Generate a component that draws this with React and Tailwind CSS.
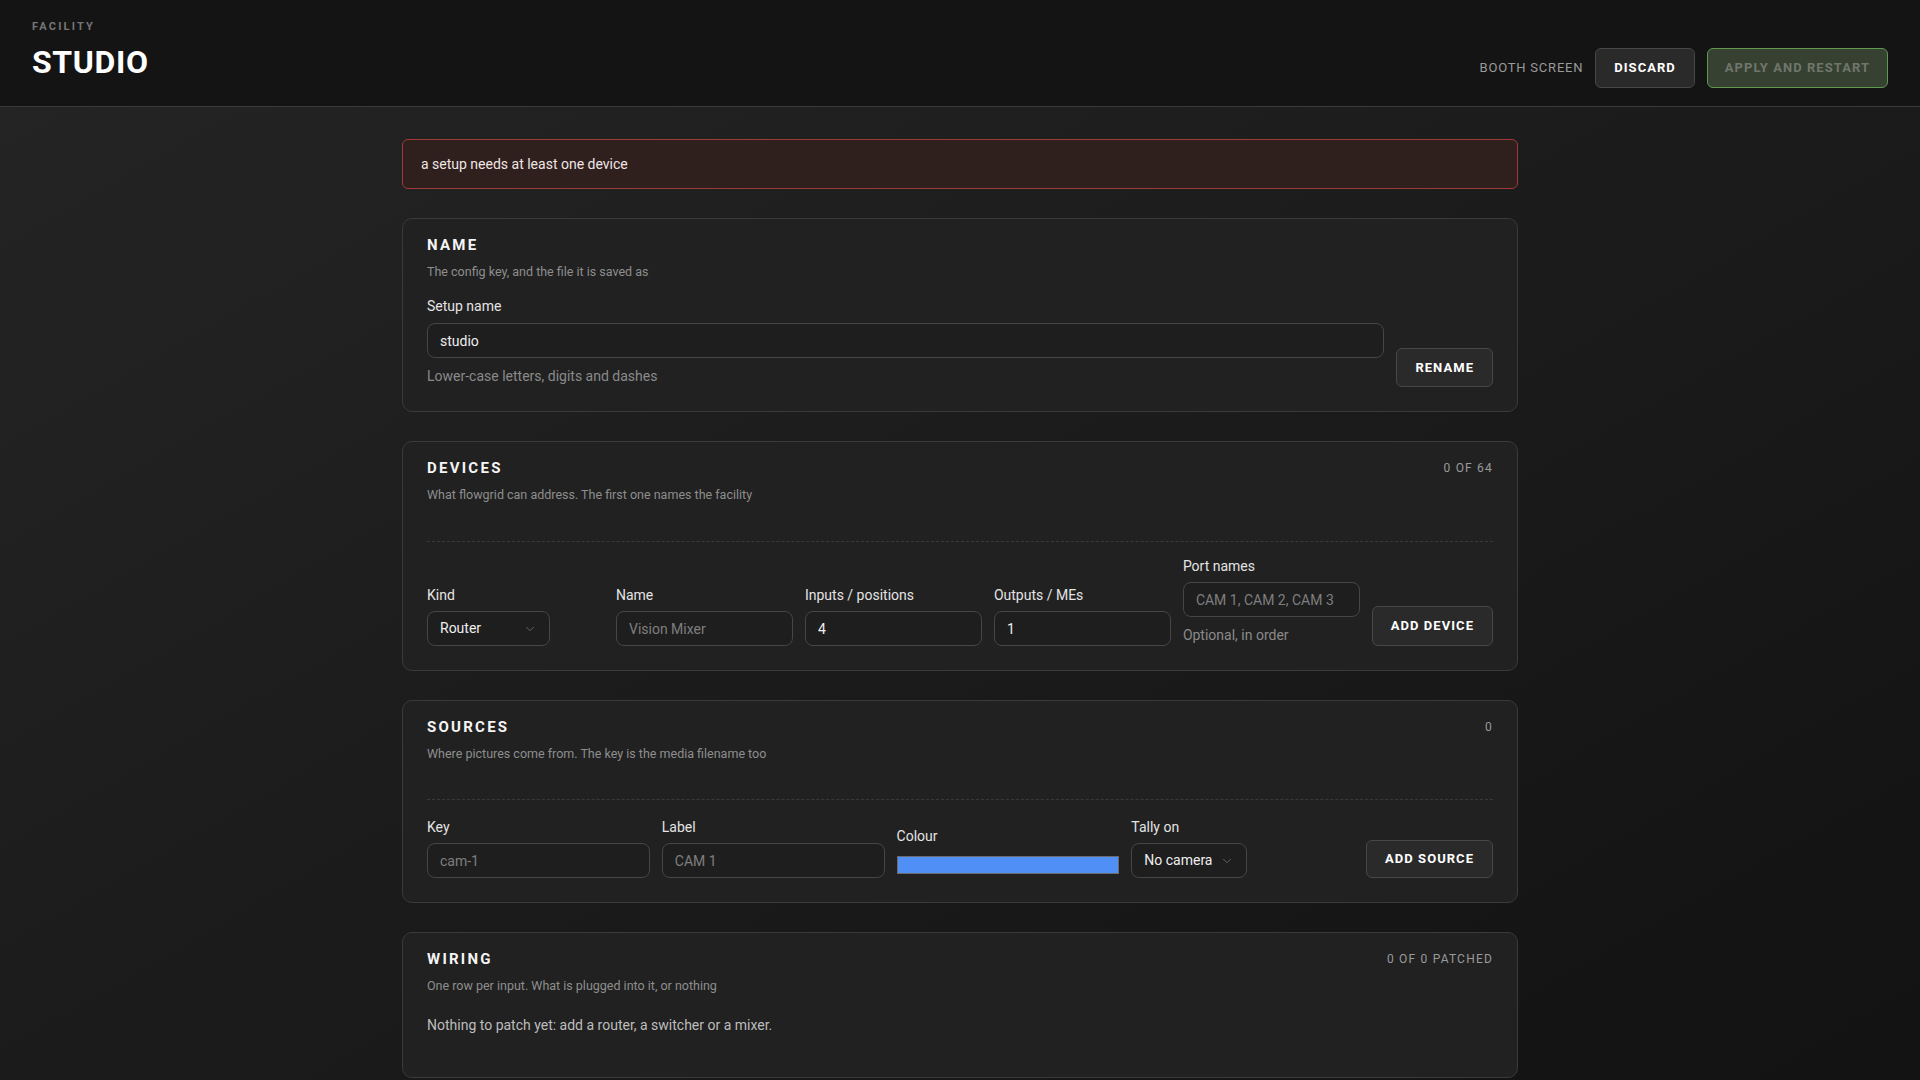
import { ChevronDown } from 'lucide-react'

const labelClass = "block mb-1.5 text-[14px] leading-5 text-[#e4e4e4]"
const inputClass = "h-[35px] w-full rounded-lg border border-[#464646] bg-[#1e1e1e] px-3 text-[14px] text-[#eeeeee] placeholder:text-[#7f7f7f] outline-none"
const buttonClass = "shrink-0 rounded-md border border-[#474747] bg-[#2a2a2a] px-[18px] text-[13px] font-bold tracking-[0.08em] text-white"
const hintClass = "mt-[7px] text-[14px] leading-[22px] text-[#8a8a8a]"

function Card({ title, count, desc, children }) {
  return (
    <section className="rounded-[10px] border border-[#3a3a3a] bg-[#212121] px-6 pt-4 pb-6">
      <div className="flex items-start justify-between">
        <h2 className="text-[15px] leading-5 font-bold tracking-[0.15em] text-[#f5f5f5]">{title}</h2>
        {count && (
          <span className="text-[12px] leading-5 tracking-[0.1em] text-[#9a9a9a]">{count}</span>
        )}
      </div>
      <p className="mt-2 text-[12.5px] leading-[18px] text-[#8e8e8e]">{desc}</p>
      {children}
    </section>
  )
}

function Select({ value, width }) {
  return (
    <div className={`${width} flex h-[35px] items-center justify-between rounded-lg border border-[#464646] bg-[#1e1e1e] pl-3 pr-3 text-[14px] text-[#eeeeee]`}>
      <span>{value}</span>
      <ChevronDown size={14} strokeWidth={1.5} className="text-[#6a6a6a]" />
    </div>
  )
}

function Field({ label, placeholder, value }) {
  return (
    <div className="min-w-0 flex-1">
      <label className={labelClass}>{label}</label>
      <input className={inputClass} placeholder={placeholder} defaultValue={value} />
    </div>
  )
}

export default function App() {
  return (
    <div className="min-h-screen bg-linear-to-br from-[#252525] to-[#121212] font-[Roboto,'Noto_Sans',sans-serif]">
      <header className="flex h-[107px] items-start justify-between border-b border-[#3a3a3a] bg-[#141414] px-8">
        <div className="pt-5">
          <div className="text-[11px] leading-[14px] font-bold tracking-[0.2em] text-[#767676]">FACILITY</div>
          <h1 className="mt-3 text-[32px] leading-8 font-bold tracking-[0.02em] text-white">STUDIO</h1>
        </div>
        <div className="mt-12 flex items-center gap-3">
          <span className="text-[13px] tracking-[0.06em] text-[#9a9a9a]">BOOTH SCREEN</span>
          <button className={`${buttonClass} h-10`}>DISCARD</button>
          <button className="h-10 rounded-md border border-[#5e9a4e] bg-[#364132] px-[17px] text-[13px] font-bold tracking-[0.08em] text-[#70766c]">
            APPLY AND RESTART
          </button>
        </div>
      </header>

      <main className="mx-auto flex w-[1116px] flex-col gap-[29px] pt-8 pb-8">
        <div className="rounded-md border border-[#9b3d34] bg-[#2f1f1d] px-[18px] py-[14px] text-[14px] leading-5 text-[#f0e6e4]">
          a setup needs at least one device
        </div>

        <Card title="NAME" desc="The config key, and the file it is saved as">
          <div className="mt-[15px] flex items-end gap-3">
            <div className="min-w-0 flex-1">
              <label className="mb-[7px] block text-[14px] leading-5 text-[#e4e4e4]">Setup name</label>
              <input className={inputClass} defaultValue="studio" />
              <p className={hintClass}>Lower-case letters, digits and dashes</p>
            </div>
            <button className={`${buttonClass} h-[39px]`}>RENAME</button>
          </div>
        </Card>

        <Card title="DEVICES" count="0 OF 64" desc="What flowgrid can address. The first one names the facility">
          <div className="mt-[37px] flex items-end gap-3 border-t border-dashed border-[#3a3a3a] pt-[14px]">
            <div className="min-w-0 flex-1">
              <label className={labelClass}>Kind</label>
              <Select value="Router" width="w-[123px]" />
            </div>
            <Field label="Name" placeholder="Vision Mixer" />
            <Field label="Inputs / positions" value="4" />
            <Field label="Outputs / MEs" value="1" />
            <div className="min-w-0 flex-1">
              <label className={labelClass}>Port names</label>
              <input className={inputClass} placeholder="CAM 1, CAM 2, CAM 3" />
              <p className={hintClass}>Optional, in order</p>
            </div>
            <button className={`${buttonClass} h-10`}>ADD DEVICE</button>
          </div>
        </Card>

        <Card title="SOURCES" count="0" desc="Where pictures come from. The key is the media filename too">
          <div className="mt-9 flex items-end gap-3 border-t border-dashed border-[#3a3a3a] pt-[17px]">
            <Field label="Key" placeholder="cam-1" />
            <Field label="Label" placeholder="CAM 1" />
            <div className="min-w-0 flex-1">
              <label className={labelClass}>Colour</label>
              <div className="h-[26px] py-1">
                <div className="h-full w-full border border-[#6b6b6b] bg-[#508ff5]" />
              </div>
            </div>
            <div className="min-w-0 flex-1">
              <label className={labelClass}>Tally on</label>
              <Select value="No camera" width="w-[116px]" />
            </div>
            <button className={`${buttonClass} h-[38px]`}>ADD SOURCE</button>
          </div>
        </Card>

        <Card title="WIRING" count="0 OF 0 PATCHED" desc="One row per input. What is plugged into it, or nothing">
          <p className="mt-5 mb-[18px] text-[14px] leading-5 text-[#bdbdbd]">
            Nothing to patch yet: add a router, a switcher or a mixer.
          </p>
        </Card>
      </main>
    </div>
  )
}
